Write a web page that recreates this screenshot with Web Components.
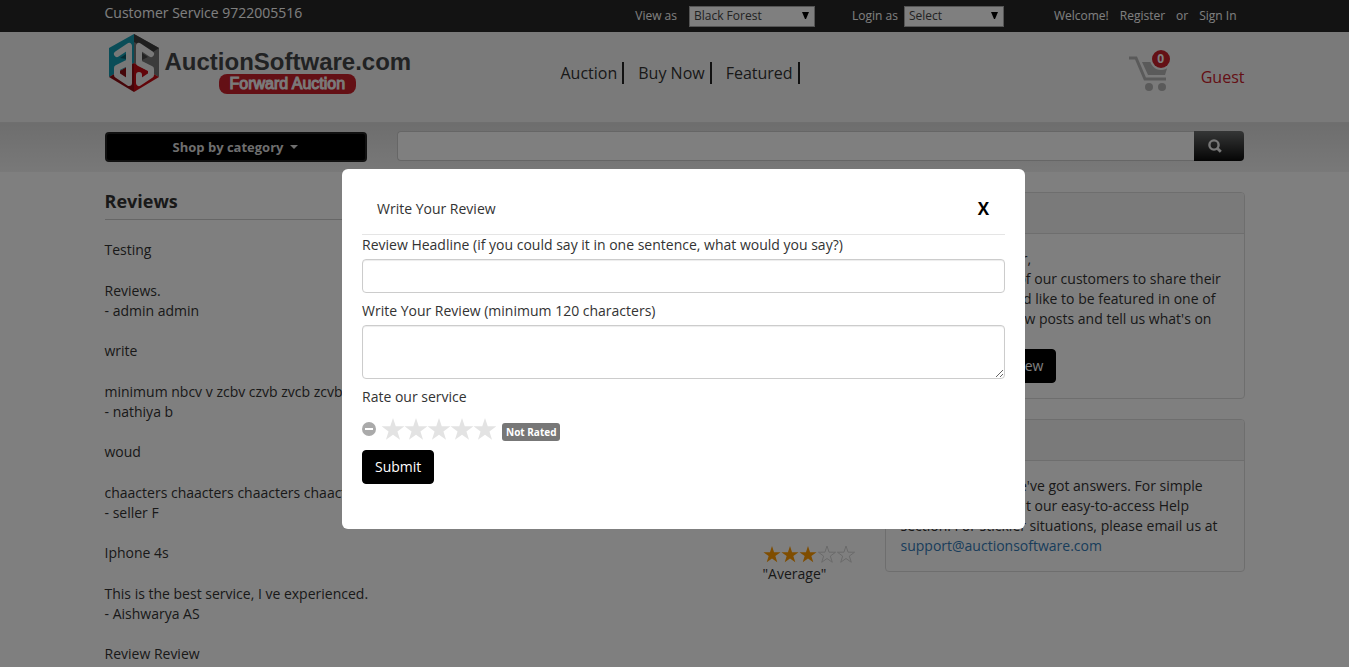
<!DOCTYPE html>
<html lang="en">
<head>
<meta charset="utf-8">
<title>Reviews - AuctionSoftware.com</title>
<style>
  html, body { height: 100%; }
  body { margin: 0; overflow: hidden; background: #fff; color: #333; font: 14px/20px "Open Sans", "Noto Sans", sans-serif; }
</style>
</head>
<body>
<auction-app></auction-app>

<template id="auction-app">
  <style>
    :host { display: block; }
    .columns { display: grid; grid-template-columns: minmax(0, 1fr) 360px; gap: 30px; max-width: 1140px; margin: 0 auto; padding: 20px 16px 0; }
    h1 { margin: 0 0 20px; padding-bottom: 9px; border-bottom: 1px solid #ccc; font-size: 18px; line-height: 18px; font-weight: 700; }
    aside { display: grid; gap: 20px; align-content: start; }
    p { margin: 0; }
    a { color: #337ab7; text-decoration: none; }
    button { display: block; height: 34px; padding: 0 12px; border: 1px solid #000; border-radius: 4px; background: #000; color: #fff; font: inherit; }
  </style>
  <top-bar></top-bar>
  <site-header></site-header>
  <search-bar></search-bar>
  <div class="columns">
    <main>
      <h1>Reviews</h1>
      <review-item author="admin admin" stars="3" verdict="Average"><span slot="title">Testing</span>Reviews.</review-item>
      <review-item author="nathiya b" stars="3" verdict="Average"><span slot="title">write</span>minimum nbcv v zcbv czvb zvcb zcvb zcvb</review-item>
      <review-item author="seller F" stars="3" verdict="Average"><span slot="title">woud</span>chaacters chaacters chaacters chaacters chaacters</review-item>
      <review-item author="Aishwarya AS" stars="3" verdict="Average"><span slot="title">Iphone 4s</span>This is the best service, I ve experienced.</review-item>
      <review-item><span slot="title">Review Review</span></review-item>
    </main>
    <aside>
      <side-panel>
        <span slot="heading">Your Story</span>
        <p>Dear Site Customer,<br>We would love all of our customers to share their stories. If you would like to be featured in one of our customer review posts and tell us what's on your mind.</p>
        <button type="button">Submit Your Review</button>
      </side-panel>
      <side-panel>
        <span slot="heading">Need Help?</span>
        <p>Got a question? We've got answers. For simple questions check out our easy-to-access Help section. For stickier situations, please email us at <a href="mailto:support@auctionsoftware.com">support@auctionsoftware.com</a></p>
      </side-panel>
    </aside>
  </div>
  <review-dialog></review-dialog>
</template>

<template id="top-bar">
  <style>
    :host { display: block; background: #262626; color: #fff; }
    .bar { display: flex; align-items: center; max-width: 1140px; height: 32px; margin: 0 auto; padding: 0 16px; font-size: 12px; line-height: 20px; }
    .phone { margin: 0 auto 6px 0; font-size: 14px; }
    label { margin-right: 12px; }
    label.login { margin: 0 6px 0 37px; }
    .pick { position: relative; display: block; }
    select { appearance: none; display: block; box-sizing: border-box; width: 126px; height: 21px; padding: 0 4px; border: 1px solid #aaa; border-radius: 0; background: #fff; color: #444; font: 12px/18px "Open Sans", sans-serif; }
    .narrow select { width: 100px; }
    .pick svg { position: absolute; right: 6px; top: 6px; }
    nav { display: flex; gap: 11px; margin: 0 8px 0 50px; }
    a { color: inherit; text-decoration: none; }
  </style>
  <div class="bar">
    <span class="phone">Customer Service 9722005516</span>
    <label for="theme">View as</label>
    <span class="pick"><select id="theme"><option>Black Forest</option></select><svg width="7" height="7" viewBox="0 0 7 7"><path d="M0 0H7L4 7H3Z" fill="#000"/></svg></span>
    <label class="login" for="role">Login as</label>
    <span class="pick narrow"><select id="role"><option>Select</option></select><svg width="7" height="7" viewBox="0 0 7 7"><path d="M0 0H7L4 7H3Z" fill="#000"/></svg></span>
    <nav><span>Welcome!</span><a href="#register">Register</a><span>or</span><a href="#signin">Sign In</a></nav>
  </div>
</template>

<template id="site-header">
  <style>
    :host { display: block; background: #f5f5f5; border-bottom: 1px solid #dedede; }
    .row { display: flex; align-items: flex-start; max-width: 1140px; height: 90px; margin: 0 auto; padding: 0 16px; }
    .logo { display: flex; width: 456px; color: #434547; text-decoration: none; font-family: "Liberation Sans", Arial, sans-serif; font-weight: 700; }
    .logo svg { flex: none; margin: 2px 5px 0 3px; }
    .words { display: grid; justify-items: start; align-content: start; padding-top: 18px; }
    .name { font-size: 24px; line-height: 24px; }
    .tag { margin-left: 54px; padding: 0 11px; border-radius: 8px; background: #c9202b; color: #f5f5f5; font-size: 16px; line-height: 20px; font-weight: 400; -webkit-text-stroke: 1px #f5f5f5; }
    nav { display: flex; gap: 14px; padding-top: 30px; font-size: 16px; line-height: 22px; }
    nav a { padding-right: 5px; border-right: 2px solid #222; color: #333; text-decoration: none; }
    .cart { position: relative; margin: 18px 31px 0 auto; }
    .cart svg { display: block; }
    .count { position: absolute; left: 23px; top: 0; width: 18px; border-radius: 50%; background: #c9202b; color: #fff; font-size: 12px; line-height: 18px; font-weight: 700; text-align: center; }
    .guest { padding-top: 35px; color: #c9202b; font-size: 16px; line-height: 20px; text-decoration: none; }
  </style>
  <div class="row">
    <a class="logo" href="#home">
      <svg width="52" height="58" viewBox="0 0 52 58">
        <path d="M26 0L1 14V43L26 29Z" fill="#159bb0"/>
        <path d="M26 0L51 14V43L26 29Z" fill="#777"/>
        <path d="M26 0L51 14L45 18L26 8Z" fill="#3d3d3d"/>
        <path d="M1 43L26 29V58Z" fill="#8d0d12"/>
        <path d="M26 29L51 43L26 58Z" fill="#c40a12"/>
        <path d="M9 20L21 12V49L9 41V34L21 28" fill="none" stroke="#f0f0f0" stroke-width="6" stroke-linejoin="round" stroke-linecap="round"/>
        <path d="M43 20L31 12V29L43 35V41L31 49V41" fill="none" stroke="#f0f0f0" stroke-width="6" stroke-linejoin="round" stroke-linecap="round"/>
        <path d="M34 19L40 23L34 26Z" fill="#444"/>
        <path d="M18 20L12 24L18 25Z" fill="#0b5968"/>
      </svg>
      <span class="words"><span class="name">AuctionSoftware.com</span><span class="tag">Forward Auction</span></span>
    </a>
    <nav><a href="#auction">Auction</a><a href="#buy">Buy Now</a><a href="#featured">Featured</a></nav>
    <div class="cart">
      <svg width="41" height="42" viewBox="0 0 41 42">
        <path d="M0 8H7L16 29H37" fill="none" stroke="#b4b4b4" stroke-width="3"/>
        <path d="M13 12H40L36 25H19Z" fill="#b4b4b4"/>
        <circle cx="20" cy="37" r="4" fill="#b4b4b4"/><circle cx="33" cy="37" r="4" fill="#b4b4b4"/>
        <circle cx="32" cy="9" r="11" fill="#f5f5f5"/>
      </svg>
      <span class="count">0</span>
    </div>
    <a class="guest" href="#account">Guest</a>
  </div>
</template>

<template id="search-bar">
  <style>
    :host { display: block; background: linear-gradient(#dcdcdc, #f2f2f2); }
    .row { display: flex; align-items: flex-start; gap: 30px; box-sizing: border-box; max-width: 1172px; height: 49px; margin: 0 auto; padding: 8px 17px 0 16px; }
    .shop { display: flex; align-items: center; justify-content: center; gap: 7px; width: 262px; height: 30px; margin-top: 1px; border: 2px solid #222; border-radius: 4px; background: #000; color: #ddd; font: 700 13px/20px "Open Sans", sans-serif; }
    form { flex: 1; display: flex; }
    input { flex: 1; min-width: 0; box-sizing: border-box; height: 30px; padding: 0 10px; border: 1px solid #ccc; border-right: 0; border-radius: 4px 0 0 4px; background: #fff; font: inherit; }
    .go { width: 50px; height: 30px; padding: 0 7px 0 0; border: 0; border-radius: 0 4px 4px 0; background: linear-gradient(#6b6d6d, #0a0a0a); }
    .go svg { display: block; margin: 0 auto; }
  </style>
  <div class="row">
    <button class="shop" type="button">Shop by category<svg width="8" height="4" viewBox="0 0 8 4"><path d="M0 0H8L4 4Z" fill="#ddd"/></svg></button>
    <form>
      <input type="search" aria-label="Search">
      <button class="go" type="button" aria-label="Search"><svg width="14" height="14" viewBox="0 0 14 14" fill="none" stroke="#eee"><circle cx="6" cy="6" r="4.6" stroke-width="2.4"/><path d="M9.2 9.2L12.8 12.8" stroke-width="2.8"/></svg></button>
    </form>
  </div>
</template>

<template id="review-item">
  <style>
    :host { display: grid; grid-template-columns: minmax(0, 1fr) 92px; margin-bottom: 20px; }
    .title { margin-bottom: 21px; }
    .rating { padding-top: 1px; }
    .rating svg { display: block; }
  </style>
  <div>
    <div class="title"><slot name="title"></slot></div>
    <div><slot></slot></div>
    <div class="author"></div>
  </div>
  <div class="rating"></div>
</template>

<template id="side-panel">
  <style>
    :host { display: block; border: 1px solid #ddd; border-radius: 4px; background: #fff; overflow: hidden; }
    header { padding: 10px 15px; border-bottom: 1px solid #ddd; background: #f5f5f5; }
    .body { padding: 15px; }
  </style>
  <header><slot name="heading"></slot></header>
  <div class="body"><slot></slot></div>
</template>

<template id="review-dialog">
  <style>
    :host { position: fixed; inset: 0; display: grid; place-items: center; padding: 31px 0 0 18px; background: rgba(0, 0, 0, 0.5); }
    section { box-sizing: border-box; width: 683px; max-width: 100%; padding: 20px 20px 45px; border-radius: 6px; background: #fff; }
    header { display: flex; align-items: center; justify-content: space-between; padding: 10px 16px 15px 15px; border-bottom: 1px solid #e5e5e5; }
    h2 { margin: 0; font: inherit; }
    .close { padding: 0; border: 0; background: none; color: #000; font: 700 17px/20px "Open Sans", sans-serif; }
    label, .caption { display: block; margin-bottom: 4px; }
    input, textarea { display: block; box-sizing: border-box; width: 100%; height: 34px; margin: 0 0 8px; padding: 6px 12px; border: 1px solid #ccc; border-radius: 4px; background: #fff; box-shadow: inset 0 1px 1px rgba(0, 0, 0, 0.075); color: #555; font: inherit; }
    textarea { height: 54px; resize: vertical; }
    .rate { display: flex; align-items: center; height: 36px; margin-bottom: 3px; }
    .rate svg { display: block; }
    .stars { margin: 0 6px 0 5px; }
    .badge { margin-top: 6px; padding: 0 4px; border-radius: 3px; background: #777; color: #fff; font-size: 10px; line-height: 18px; font-weight: 700; }
    .submit { height: 34px; padding: 0 12px; border: 1px solid #000; border-radius: 4px; background: #000; color: #fff; font: inherit; display: block; }
  </style>
  <section role="dialog" aria-labelledby="dialog-title">
    <header><h2 id="dialog-title">Write Your Review</h2><button class="close" type="button">X</button></header>
    <form>
      <label for="headline">Review Headline (if you could say it in one sentence, what would you say?)</label>
      <input id="headline" type="text">
      <label for="review">Write Your Review (minimum 120 characters)</label>
      <textarea id="review"></textarea>
      <div class="caption">Rate our service</div>
      <div class="rate">
        <svg width="14" height="14" viewBox="0 0 14 14"><circle cx="7" cy="7" r="7" fill="#aaa"/><path d="M3 6H11V8H3Z" fill="#fff"/></svg>
        <div class="stars"></div>
        <span class="badge">Not Rated</span>
      </div>
      <button class="submit" type="button">Submit</button>
    </form>
  </section>
</template>

<script>
  // Points of a five-pointed star centred on (cx, cy).
  function starPoints(cx, cy, radius) {
    const points = [];
    for (let i = 0; i < 10; i++) {
      const r = i % 2 ? radius * 0.39 : radius;
      const angle = Math.PI * (i / 5 - 0.5);
      points.push((cx + r * Math.cos(angle)).toFixed(2) + ',' + (cy + r * Math.sin(angle)).toFixed(2));
    }
    return points.join(' ');
  }

  class TemplateElement extends HTMLElement {
    constructor() {
      super();
      const template = document.getElementById(this.localName);
      this.attachShadow({ mode: 'open' }).append(template.content.cloneNode(true));
    }
  }

  class ReviewItem extends TemplateElement {
    connectedCallback() {
      if (this.hasAttribute('author')) {
        this.shadowRoot.querySelector('.author').textContent = '- ' + this.getAttribute('author');
      }
      if (!this.hasAttribute('stars')) return;
      const filled = Number(this.getAttribute('stars'));
      let shapes = '';
      for (let i = 0; i < 5; i++) {
        shapes += i < filled
          ? `<polygon points="${starPoints(9 + i * 18, 11, 9)}" fill="#ff9a00"/>`
          : `<polygon points="${starPoints(64 + (i - filled) * 19, 11, 9)}" fill="none" stroke="#d4d4d4"/>`;
      }
      this.shadowRoot.querySelector('.rating').innerHTML =
        `<svg width="92" height="20" viewBox="0 0 92 20">${shapes}</svg><span>"${this.getAttribute('verdict')}"</span>`;
    }
  }

  class ReviewDialog extends TemplateElement {
    connectedCallback() {
      let shapes = '';
      for (let i = 0; i < 5; i++) shapes += `<polygon points="${starPoints(12 + i * 23, 12, 12)}" fill="#e3e3e3"/>`;
      this.shadowRoot.querySelector('.stars').innerHTML = `<svg width="115" height="23" viewBox="0 0 115 23">${shapes}</svg>`;
    }
  }

  customElements.define('top-bar', class extends TemplateElement {});
  customElements.define('site-header', class extends TemplateElement {});
  customElements.define('search-bar', class extends TemplateElement {});
  customElements.define('side-panel', class extends TemplateElement {});
  customElements.define('review-item', ReviewItem);
  customElements.define('review-dialog', ReviewDialog);
  customElements.define('auction-app', class extends TemplateElement {});
</script>
</body>
</html>
